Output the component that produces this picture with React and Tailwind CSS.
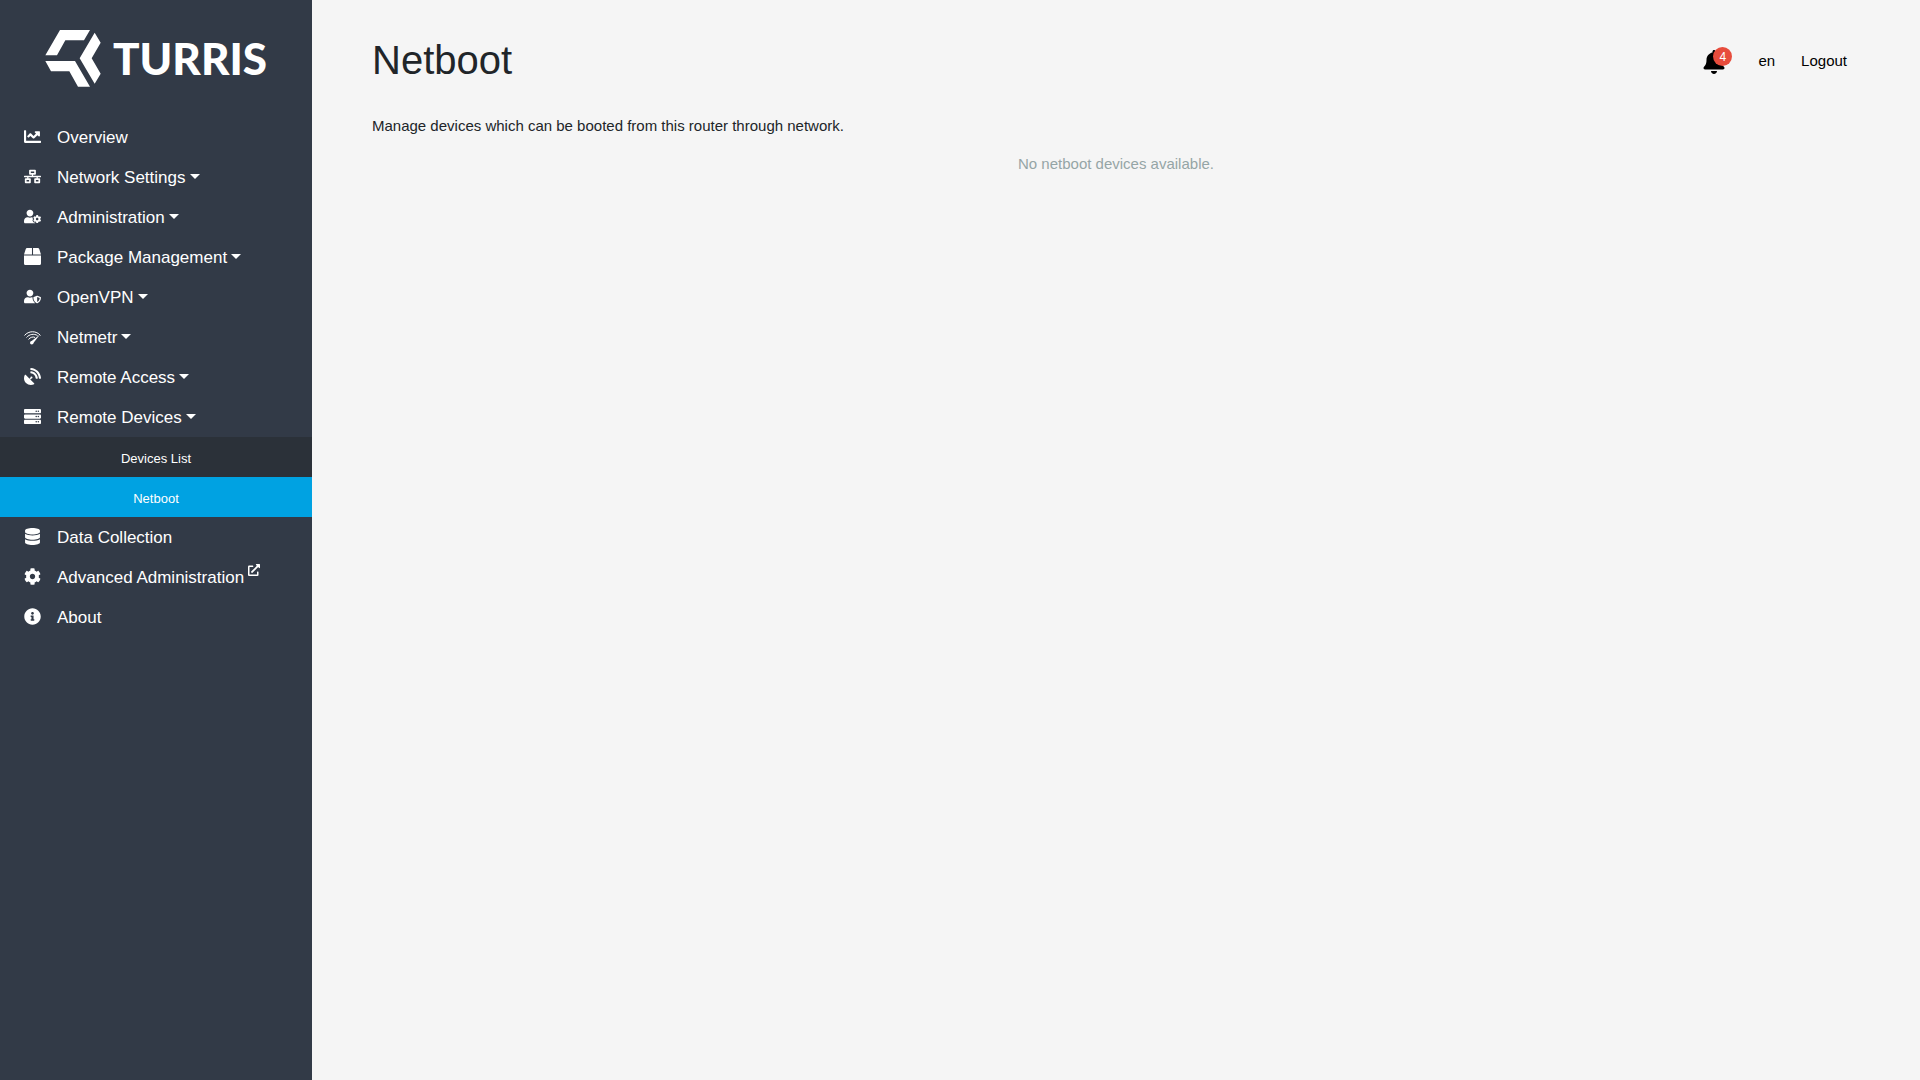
import {
  FaBell,
  FaBox,
  FaChartLine,
  FaCog,
  FaDatabase,
  FaExternalLinkAlt,
  FaInfoCircle,
  FaNetworkWired,
  FaSatelliteDish,
  FaServer,
  FaUserCog,
  FaUserShield,
} from "react-icons/fa";

function NetmetrIcon({ className }) {
  return (
    <svg className={className} viewBox="0 0 34 34" fill="none" stroke="currentColor" aria-hidden="true">
      <path d="M1 15C9 5 25 5 33 15" strokeWidth="2" />
      <path d="M5 19C11 12 20 11 27 15" strokeWidth="2" />
      <path d="M9 23C13 18 18 17 22 19" strokeWidth="2" />
      <path d="M32 13 14 27 18 31Z" fill="currentColor" stroke="none" />
      <circle cx="15.500" cy="29.500" r="3.500" fill="currentColor" stroke="none" />
    </svg>
  );
}

function Logo() {
  return (
    <a href="#overview" className="flex h-[117px] items-start justify-center gap-3 pt-[30px] text-white">
      <svg className="h-[57px] w-[56px]" viewBox="132 90 168 171" fill="currentColor" aria-hidden="true">
        <path d="M177 90H267L249 121H193L168 166H133Z" />
        <path d="M281 98 299 128 272 175 299 221 281 251 236 175Z" />
        <path d="M133 183H222L267 260H231L205 214H150Z" />
      </svg>
      <span className="font-['Lato',sans-serif] text-[44px] leading-[57px] font-black">TURRIS</span>
    </a>
  );
}

const items = [
  { label: "Overview", icon: FaChartLine },
  { label: "Network Settings", icon: FaNetworkWired, menu: true },
  { label: "Administration", icon: FaUserCog, menu: true },
  { label: "Package Management", icon: FaBox, menu: true },
  { label: "OpenVPN", icon: FaUserShield, menu: true },
  { label: "Netmetr", icon: NetmetrIcon, menu: true },
  { label: "Remote Access", icon: FaSatelliteDish, menu: true },
  { label: "Remote Devices", icon: FaServer, menu: true, children: ["Devices List", "Netboot"] },
  { label: "Data Collection", icon: FaDatabase },
  { label: "Advanced Administration", icon: FaCog, external: true },
  { label: "About", icon: FaInfoCircle },
];

const rowClass = "flex h-10 w-full items-center px-6 text-left text-[17px] text-white hover:bg-[#2b3139]";

function NavItem({ item }) {
  const Icon = item.icon;
  const content = (
    <>
      <Icon className="mr-4 mb-px size-[17px] shrink-0" />
      <span className="pt-0.5">{item.label}</span>
      {item.menu && (
        <span className="mb-0.5 ml-1 border-x-5 border-t-5 border-x-transparent border-t-white" />
      )}
      {item.external && <FaExternalLinkAlt className="mb-3.5 ml-1 size-3" />}
    </>
  );
  return (
    <li>
      {item.menu ? (
        <button type="button" className={rowClass} aria-expanded={Boolean(item.children)}>
          {content}
        </button>
      ) : (
        <a href="#page" className={rowClass}>
          {content}
        </a>
      )}
      {item.children && (
        <ul className="bg-[#2b3139]">
          {item.children.map((child) => (
            <li key={child}>
              <a
                href="#page"
                aria-current={child === "Netboot" ? "page" : undefined}
                className="flex h-10 items-center justify-center pt-1 text-[13px] text-white aria-[current=page]:bg-[#00a2e2]"
              >
                {child}
              </a>
            </li>
          ))}
        </ul>
      )}
    </li>
  );
}

export default function App() {
  return (
    <div className="flex min-h-screen bg-[#f5f5f5] font-['Liberation_Sans',Arial,sans-serif] text-[15px] text-[#212529]">
      <nav className="w-[312px] shrink-0 bg-[#323a47]">
        <Logo />
        <ul>
          {items.map((item) => (
            <NavItem key={item.label} item={item} />
          ))}
        </ul>
      </nav>
      <main className="min-w-0 flex-1 px-15 pt-9">
        <header className="flex items-center justify-between">
          <h1 className="text-[40px] leading-12">Netboot</h1>
          <div className="flex items-center pt-0.5 pr-[13px] text-black">
            <button type="button" aria-label="Notifications" className="relative mr-8 pt-0.5">
              <FaBell className="size-6" />
              <span className="absolute -top-px left-[11px] flex size-[19px] items-center justify-center rounded-full bg-[#e74c3c] text-[12px] text-white">
                4
              </span>
            </button>
            <button type="button" className="mr-6.5">en</button>
            <a href="#logout">Logout</a>
          </div>
        </header>
        <p className="mt-[30px] leading-6">Manage devices which can be booted from this router through network.</p>
        <p className="mt-3.5 text-center leading-6 text-[#95a5a6]">No netboot devices available.</p>
      </main>
    </div>
  );
}
